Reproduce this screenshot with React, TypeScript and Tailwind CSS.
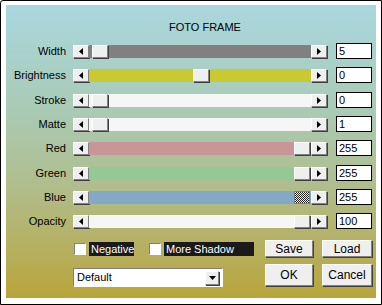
import React from "react";

type Row = {
  label: string;
  value: string;
  pos: number;
  track: string;
  mt: string;
  focus?: boolean;
};

const rows: Row[] = [
  { label: "Width", value: "5", pos: 0, track: "bg-[#808080]", mt: "mt-[10px]" },
  { label: "Brightness", value: "0", pos: 0.5, track: "bg-[#c9c933]", mt: "mt-[8px]" },
  { label: "Stroke", value: "0", pos: 0, track: "bg-[#f6f6f6]", mt: "mt-[9px]" },
  { label: "Matte", value: "1", pos: 0, track: "bg-[#f6f6f6]", mt: "mt-[8px]" },
  { label: "Red", value: "255", pos: 1, track: "bg-[#c99597]", mt: "mt-[8px]" },
  { label: "Green", value: "255", pos: 1, track: "bg-[#94c894]", mt: "mt-[9px]" },
  { label: "Blue", value: "255", pos: 1, track: "bg-[#84a8c8]", mt: "mt-[8px]", focus: true },
  { label: "Opacity", value: "100", pos: 1, track: "bg-[#f6f6f6]", mt: "mt-[8px]" },
];

const bevel =
  "bg-[#efefef] border border-t-white border-l-white border-b-[#808080] border-r-[#808080] shadow-[1px_1px_0_#404040]";

function ArrowButton({ dir }: { dir: "left" | "right" }) {
  return (
    <div className={`w-4 h-[13px] flex items-center justify-center ${bevel}`}>
      <svg width="4" height="7" viewBox="0 0 4 7">
        {dir === "left" ? <polygon points="4,0 4,7 0,3.5" fill="#000" /> : <polygon points="0,0 0,7 4,3.5" fill="#000" />}
      </svg>
    </div>
  );
}

function Slider({ row }: { row: Row }) {
  // thumb travels from 3px to 205px inside the 222px track
  const left = 3 + row.pos * 202;
  return (
    <div className="flex items-center h-4">
      <div className="w-[60px] text-right">{row.label}</div>
      <div className="ml-[7px]">
        <ArrowButton dir="left" />
      </div>
      <div className={`relative w-[222px] h-[13px] ${row.track}`}>
        <div
          className={`absolute top-0 w-4 h-[13px] ${
            row.focus
              ? "border border-[#808080] bg-[repeating-conic-gradient(#222_0_25%,#eee_0_50%)] bg-[length:2px_2px]"
              : bevel
          }`}
          style={{ left }}
        />
      </div>
      <ArrowButton dir="right" />
      <div className="ml-[9px] w-[36px] h-4 bg-white border border-black pl-[2px] leading-[14px]">{row.value}</div>
    </div>
  );
}

function Check({ label, width }: { label: string; width: string }) {
  return (
    <div className="flex items-center">
      <div className="w-3 h-3 bg-white border border-t-[#808080] border-l-[#808080] border-b-white border-r-white" />
      <div className={`ml-[3px] h-[14px] bg-[#1a1a1a] text-white pl-[2px] leading-[14px] ${width}`}>{label}</div>
    </div>
  );
}

export default function App() {
  return (
    <div
      className="w-[382px] h-[305px] bg-white border border-black rounded-tl-[3px] pt-[4px] pl-[5px] pr-[5px] pb-[6px] text-[11px] text-black"
      style={{ fontFamily: '"Liberation Sans", Arial, sans-serif' }}
    >
      <div className="w-[370px] h-[293px] bg-[linear-gradient(180deg,#aad7df_0%,#a9cbb6_35%,#b0bd8c_62%,#b6af5e_84%,#b9a43a_100%)]">
        <div className="pt-[16px] pl-[28px] text-center leading-[12px]">FOTO FRAME</div>

        {rows.map((row) => (
          <div key={row.label} className={row.mt}>
            <Slider row={row} />
          </div>
        ))}

        <div className="mt-[11px] flex">
          <div className="w-[259px] pl-[67px]">
            <div className="h-[17px] flex items-center pl-[1px]">
              <Check label="Negative" width="w-[45px]" />
              <div className="ml-[15px]">
                <Check label="More Shadow" width="w-[90px]" />
              </div>
            </div>
            <div className="mt-[11px] w-[150px] h-[19px] bg-white border border-t-[#808080] border-l-[#808080] border-b-white border-r-white flex items-center justify-between pl-[3px] pr-[3px]">
              <span>Default</span>
              <div className={`w-[14px] h-[14px] flex items-center justify-center ${bevel}`}>
                <svg width="7" height="4" viewBox="0 0 7 4">
                  <polygon points="0,0 7,0 3.5,4" fill="#000" />
                </svg>
              </div>
            </div>
          </div>
          <div className="grid grid-cols-[48px_50px] grid-rows-[17px_22px] gap-x-[9px] gap-y-[7px] text-[12px]">
            <button className={`${bevel} leading-none`}>Save</button>
            <button className={`${bevel} leading-none`}>Load</button>
            <button className={`${bevel} leading-none`}>OK</button>
            <button className={`${bevel} leading-none`}>Cancel</button>
          </div>
        </div>
      </div>
    </div>
  );
}
